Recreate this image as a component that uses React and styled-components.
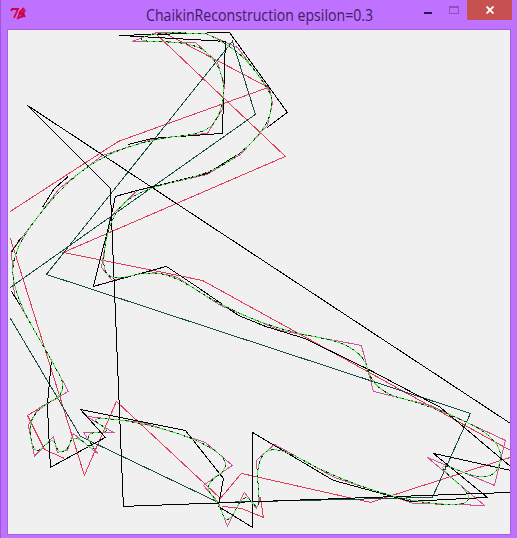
import React from "react";
import styled, { createGlobalStyle } from "styled-components";

const Global = createGlobalStyle`
  body { margin: 0; overflow: hidden; }
`;

const Window = styled.div`
  box-sizing: border-box;
  width: 517px;
  height: 538px;
  display: flex;
  flex-direction: column;
  background: #bf72ff;
  border-left: 1px solid #9a58d2;
  padding: 0 6px 3px 6px;
`;

const TitleBar = styled.header`
  height: 29px;
  flex: none;
  display: grid;
  grid-template-columns: 90px 1fr 99px;
  margin-right: -1px;
`;

const Feather = styled.svg`
  margin: 7px 0 0 3px;
`;

const Title = styled.h1`
  margin: 0;
  padding: 1px 0 0 49px;
  font: 400 15.5px/28px "Open Sans", "Noto Sans", sans-serif;
  color: #40205c;
  white-space: nowrap;
`;

const TitleText = styled.span`
  display: inline-block;
  transform: scaleX(${(p) => p.$stretch});
  transform-origin: left center;
`;

const Controls = styled.div`
  display: flex;
  justify-content: flex-end;
`;

const ControlButton = styled.button`
  width: ${(p) => p.$width}px;
  height: 20px;
  padding: 0;
  border: 0;
  display: grid;
  place-items: center;
  background: ${(p) => (p.$danger ? "#c75050" : "transparent")};
`;

const Canvas = styled.main`
  box-sizing: border-box;
  width: 504px;
  height: 506px;
  border: 1px solid #a561dc;
  background: #f0f0f0;
`;

const Plot = styled.svg`
  display: block;
  width: 502px;
  height: 504px;
`;

const Line = styled.path`
  fill: none;
  stroke: ${(p) => p.$color};
  stroke-width: 1;
  stroke-dasharray: ${(p) => p.$dash || "none"};
`;

const black = [
  "M510 423 L27 105 L110 188 L111 215 L123 506 L510 492",
  "M510 466 L440 407 L370 370 L304 338 L265 326 L238 315 L196 286 L166 266 L93 286 L111 215 L115 196 L137 190 L207 173 L236 155",
  "M267 127 L287 112 L229 32 L119 35 L225 41 L222 133 L152 138 L128 144",
  "M68 176 L54 188 L42 207",
  "M20 238 L11 252",
  "M11 291 L20 305",
  "M38 337 L51 360 L47 405 L50 467 L105 437 L80 409 L185 430 L223 478 L218 506 L252 527 L252 432 L333 480 L410 501 L487 497 L433 453 L510 470",
];

const teal =
  "M10 287 L255 114 L232 41 L46 274 L470 413 L432 497 L218 502 L80 436 L10 318";

const red = [
  "M155 33 L285 156 L63 252 L202 280 L510 450",
  "M510 457 L370 502 L241 473 L220 498 L116 401 L84 475 L10 238",
  "M10 211 L118 141 L268 87 L165 33",
  "M222 506 L241 508 L263 517 L260 497",
  "M64 458 L44 449 L27 415 L68 391",
];

const control = [
  [205, 33], [237, 47], [270, 91], [272, 103], [267, 125],
  [240, 154], [207, 174], [137, 190], [110, 216], [101, 267],
  [112, 280], [148, 271], [175, 276], [220, 305], [280, 330],
  [361, 345], [373, 391], [430, 405], [505, 440], [494, 485],
  [427, 457], [484, 505], [413, 503], [334, 477], [274, 444],
  [256, 460], [259, 502], [256, 508], [244, 492], [227, 526],
  [218, 502], [203, 485], [232, 465], [205, 442], [142, 422],
  [86, 416], [113, 432], [83, 432], [98, 454], [73, 433],
  [67, 450], [57, 452], [53, 436], [34, 456], [28, 425],
  [38, 408], [68, 391], [50, 358], [14, 295], [11, 251],
  [59, 188], [102, 155], [155, 138], [207, 133], [222, 109],
  [224, 84], [217, 62], [195, 42], [132, 41], [156, 32], [205, 33],
];

const controlPath = "M" + control.map((p) => p.join(" ")).join(" L");

// Quadratic B-spline: segments join at the control polygon's edge midpoints.
function smoothPath(points) {
  let d = `M${points[0].join(" ")}`;
  for (let i = 1; i < points.length - 1; i++) {
    const [x, y] = points[i];
    const [nx, ny] = points[i + 1];
    d += ` Q${x} ${y} ${(x + nx) / 2} ${(y + ny) / 2}`;
  }
  return d + ` L${points[points.length - 1].join(" ")}`;
}

const curve = smoothPath(control);

export default function App() {
  return (
    <>
      <Global />
      <Window>
        <TitleBar>
          <Feather width="17" height="14" viewBox="0 0 17 14" fill="none" stroke="#d6003d" strokeWidth="1.8">
            <path d="M1 4 L2 2 L8 2 L4 11" />
            <path d="M14 1 L10 5 L8 11 L11 10 L14 5 L10 7 M12 10 L14 8 L15 10" />
            <path d="M10 8 L15 2" strokeWidth="1" />
          </Feather>
          <Title><TitleText $stretch={0.911}>ChaikinReconstruction epsilon=0.3</TitleText></Title>
          <Controls>
            <ControlButton $width={27} aria-label="Minimize">
              <svg width="8" height="8"><path d="M0 7 H8" stroke="#32124b" strokeWidth="2" /></svg>
            </ControlButton>
            <ControlButton $width={26} aria-label="Maximize">
              <svg width="10" height="8" fill="none" stroke="#9151bd" shapeRendering="crispEdges">
                <path d="M0.5 0.5 H9.5 V7.5 H0.5 Z M0 1.5 H10" />
              </svg>
            </ControlButton>
            <ControlButton $width={45} $danger aria-label="Close">
              <svg width="8" height="8"><path d="M0.5 0.5 L7.5 7.5 M7.5 0.5 L0.5 7.5" stroke="#fff" strokeWidth="1.9" /></svg>
            </ControlButton>
          </Controls>
        </TitleBar>
        <Canvas>
          <Plot viewBox="7.6 29.6 502 504" shapeRendering="crispEdges">
            {red.map((d) => <Line key={d} d={d} $color="#de3c58" />)}
            <Line d={teal} $color="#164b3e" />
            <Line d={controlPath} $color="#d0529a" />
            {black.map((d) => <Line key={d} d={d} $color="#000" />)}
            <Line d={curve} $color="#4ee84a" />
            <Line d={curve} $color="#10301c" $dash="3 4 2 5 2 4" />
          </Plot>
        </Canvas>
      </Window>
    </>
  );
}
